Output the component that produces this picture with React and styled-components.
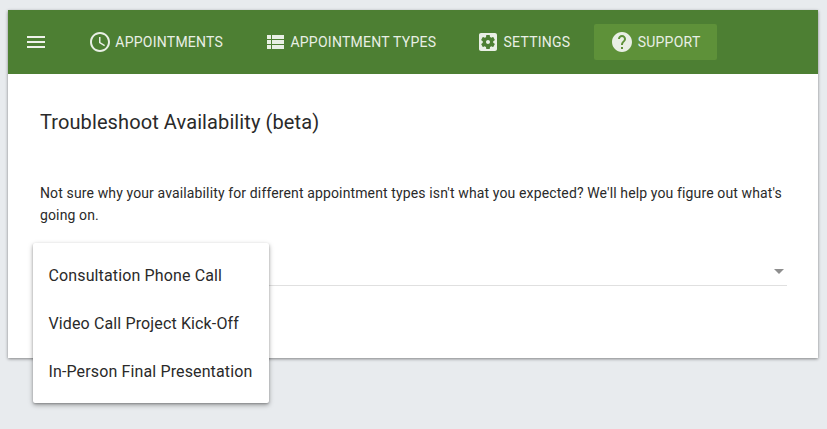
import React from "react";
import styled, { createGlobalStyle } from "styled-components";

const GlobalStyle = createGlobalStyle`
  html, body {
    margin: 0;
    height: 100%;
    background: #e8ebee;
    font-family: Roboto, "Liberation Sans", sans-serif;
  }
`;

const Page = styled.div`
  padding: 10px 9px 0 8px;
`;

const Card = styled.main`
  height: 348px;
  background: #fff;
  box-shadow: 0 1px 3px rgba(0, 0, 0, 0.45);
`;

const Toolbar = styled.nav`
  display: flex;
  align-items: center;
  gap: 8px;
  height: 64px;
  padding-left: 8px;
  background: #4d7f33;
`;

const MenuButton = styled.button`
  display: flex;
  align-items: center;
  width: 48px;
  height: 48px;
  padding: 0 0 0 8px;
  border: 0;
  background: none;
  color: #eef2ea;
`;

const NavButton = styled.button`
  display: flex;
  align-items: center;
  gap: 3.25px;
  height: 36px;
  padding: 0 16px;
  border: 0;
  border-radius: 2px;
  background: ${(p) => (p.$active ? "#5e9139" : "transparent")};
  color: #e9efe5;
  font: 400 14px Roboto, sans-serif;
  letter-spacing: 0.25px;
  text-transform: uppercase;
`;

const Icon = styled.svg`
  width: 24px;
  height: 24px;
  fill: currentColor;
  flex: none;
`;

const Content = styled.section`
  padding: 32px;
`;

const Title = styled.h1`
  margin: 0 0 43px;
  color: #2a2a2a;
  font: 400 20px/33px Roboto, sans-serif;
  letter-spacing: 0.1px;
`;

const Text = styled.p`
  margin: 0;
  color: #2a2a2a;
  font: 400 14px/22px Roboto, sans-serif;
  letter-spacing: 0.13px;
`;

const Field = styled.div`
  position: relative;
  display: flex;
  align-items: center;
  justify-content: flex-end;
  height: 32px;
  margin: 27px -1px 0 0;
  border-bottom: 1px solid #e0e0e0;
  color: #8e8e8e;
`;

const Arrow = styled.span`
  width: 0;
  height: 0;
  margin: 5px 3px 0 0;
  border-left: 5px solid transparent;
  border-right: 5px solid transparent;
  border-top: 5px solid currentColor;
`;

const Menu = styled.ul`
  position: absolute;
  top: -10px;
  left: -7px;
  width: 236px;
  margin: 0;
  padding: 8px 0;
  list-style: none;
  background: #fff;
  border-radius: 2px;
  box-shadow: 0 2px 5px rgba(0, 0, 0, 0.35), 0 1px 2px rgba(0, 0, 0, 0.2);
`;

const MenuItem = styled.li`
  height: 48px;
  padding-left: 15.5px;
  color: #2a2a2a;
  font: 400 16px/50px Roboto, sans-serif;
  letter-spacing: 0.13px;
  white-space: nowrap;
`;

const paths = {
  menu: "M3 18h18v-2H3v2zm0-5h18v-2H3v2zm0-7v2h18V6H3z",
  clock:
    "M11.99 2C6.47 2 2 6.48 2 12s4.47 10 9.99 10C17.52 22 22 17.52 22 12S17.52 2 11.99 2zM12 20c-4.42 0-8-3.58-8-8s3.58-8 8-8 8 3.58 8 8-3.58 8-8 8zm.5-13H11v6l5.25 3.15.75-1.23-4.5-2.67z",
  list: "M4 14h4v-4H4v4zm0 5h4v-4H4v4zM4 9h4V5H4v4zm5 5h12v-4H9v4zm0 5h12v-4H9v4zM9 5v4h12V5H9z",
  settings:
    "M12 10c-1.1 0-2 .9-2 2s.9 2 2 2 2-.9 2-2-.9-2-2-2zm7-7H5c-1.11 0-2 .9-2 2v14c0 1.1.89 2 2 2h14c1.1 0 2-.9 2-2V5c0-1.1-.89-2-2-2zm-1.75 9c0 .24-.02.47-.05.71l1.48 1.16c.13.11.17.3.08.45l-1.4 2.42c-.09.15-.27.21-.43.15l-1.74-.7c-.36.28-.76.51-1.18.69l-.26 1.85c-.03.17-.18.3-.35.3h-2.8c-.17 0-.32-.13-.35-.29l-.26-1.85c-.43-.18-.82-.41-1.18-.69l-1.74.7c-.16.06-.34 0-.43-.15l-1.4-2.42c-.09-.15-.05-.34.08-.45l1.48-1.16c-.03-.23-.05-.47-.05-.71 0-.24.02-.47.05-.71l-1.48-1.16c-.13-.11-.17-.3-.08-.45l1.4-2.42c.09-.15.27-.21.43-.15l1.74.7c.36-.28.76-.51 1.18-.69l.26-1.85c.03-.17.18-.3.35-.3h2.8c.17 0 .32.13.35.29l.26 1.85c.43.18.82.41 1.18.69l1.74-.7c.16-.06.34 0 .43.15l1.4 2.42c.09.15.05.34-.08.45l-1.48 1.16c.03.23.05.47.05.71z",
  help: "M12 2C6.48 2 2 6.48 2 12s4.48 10 10 10 10-4.48 10-10S17.52 2 12 2zm1 17h-2v-2h2v2zm2.07-7.75l-.9.92C13.45 12.9 13 13.5 13 15h-2v-.5c0-1.1.45-2.1 1.17-2.83l1.24-1.26c.37-.36.59-.86.59-1.41 0-1.1-.9-2-2-2s-2 .9-2 2H8c0-2.21 1.79-4 4-4s4 1.79 4 4c0 .88-.36 1.68-.93 2.25z",
};

const navItems = [
  { label: "Appointments", icon: "clock" },
  { label: "Appointment Types", icon: "list" },
  { label: "Settings", icon: "settings" },
  { label: "Support", icon: "help", active: true },
];

const appointmentTypes = [
  "Consultation Phone Call",
  "Video Call Project Kick-Off",
  "In-Person Final Presentation",
];

function MaterialIcon({ name }) {
  return (
    <Icon viewBox="0 0 24 24">
      <path d={paths[name]} />
    </Icon>
  );
}

export default function App() {
  return (
    <>
      <GlobalStyle />
      <Page>
        <Card>
          <Toolbar>
            <MenuButton aria-label="Menu">
              <MaterialIcon name="menu" />
            </MenuButton>
            {navItems.map((item) => (
              <NavButton key={item.label} $active={item.active}>
                <MaterialIcon name={item.icon} />
                {item.label}
              </NavButton>
            ))}
          </Toolbar>
          <Content>
            <Title>Troubleshoot Availability (beta)</Title>
            <Text>
              Not sure why your availability for different appointment types
              isn't what you expected? We'll help you figure out what's going
              on.
            </Text>
            <Field>
              <Arrow />
              <Menu>
                {appointmentTypes.map((type) => (
                  <MenuItem key={type}>{type}</MenuItem>
                ))}
              </Menu>
            </Field>
          </Content>
        </Card>
      </Page>
    </>
  );
}
